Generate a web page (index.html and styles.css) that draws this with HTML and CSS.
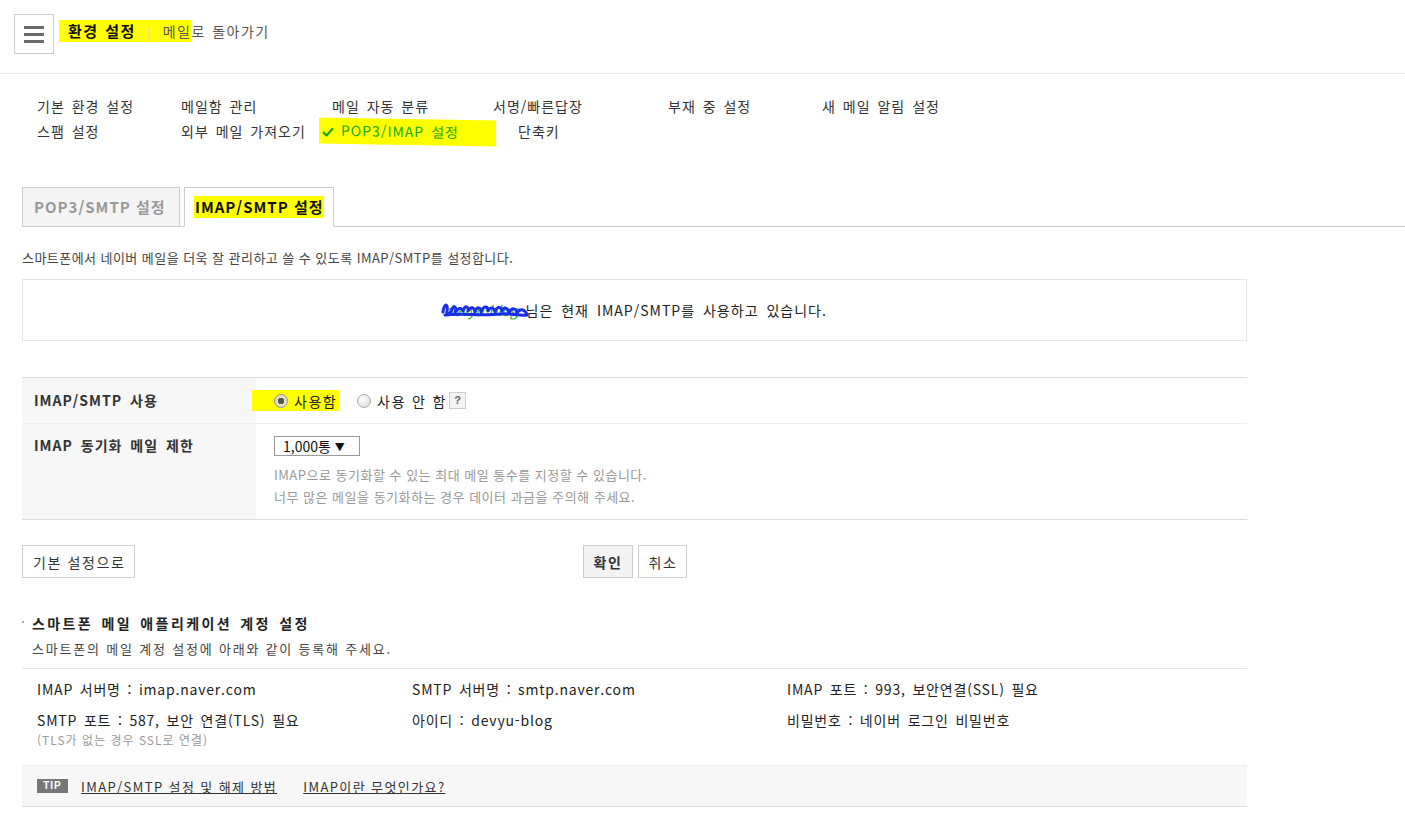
FILE: index.html
```html
<!DOCTYPE html>
<html lang="ko">
<head>
<meta charset="utf-8">
<title>환경 설정</title>
<link rel="stylesheet" href="styles.css">
</head>
<body>
<header class="top">
  <button class="burger" aria-label="메뉴">
    <span></span><span></span><span></span>
  </button>
  <div class="title-wrap">
    <span class="hl hl-title"><strong class="title">환경 설정</strong><span class="sep">|</span>메일</span><span class="back">로 돌아가기</span>
  </div>
</header>

<nav class="menu">
  <div class="menu-row">
    <a class="mi w144">기본 환경 설정</a>
    <a class="mi w151">메일함 관리</a>
    <a class="mi w161">메일 자동 분류</a>
    <a class="mi w175">서명/빠른답장</a>
    <a class="mi w154">부재 중 설정</a>
    <a class="mi">새 메일 알림 설정</a>
  </div>
  <div class="menu-row">
    <a class="mi w144">스팸 설정</a>
    <a class="mi w141">외부 메일 가져오기</a>
    <a class="mi w196 on"><span class="hl hl-menu"><svg class="check" width="12" height="10" viewBox="0 0 12 10"><path d="M1 5.5 L4.5 9 L11 1.5" fill="none" stroke="#19a800" stroke-width="2.2"/></svg>POP3/IMAP 설정</span></a>
    <a class="mi">단축키</a>
  </div>
</nav>

<main class="content">
  <div class="tabs">
    <a class="tab">POP3/SMTP 설정</a>
    <a class="tab active"><span class="hl hl-tab">IMAP/SMTP 설정</span></a>
  </div>

  <p class="desc">스마트폰에서 네이버 메일을 더욱 잘 관리하고 쓸 수 있도록 IMAP/SMTP를 설정합니다.</p>

  <div class="status">
    <span class="user"><span class="uid">devyu-blog</span><svg class="scribble" width="90" height="22" viewBox="0 0 90 22"><path d="M2 13 C3 5 7 3 6 12 C5 17 9 16 11 10 C13 6 16 8 14 13 C18 8 21 9 22 12 C24 6 28 7 27 12 C30 7 33 8 34 13 C36 7 40 8 40 13 C43 6 47 7 47 12 C50 7 53 9 54 13 C57 6 60 8 61 12 C63 7 67 9 68 14 C71 8 75 9 76 14 C79 9 83 10 86 15 M4 16 C20 14 40 17 60 15 C70 14 78 17 86 16" fill="none" stroke="#1a2ee6" stroke-width="3" stroke-linejoin="round" stroke-linecap="round"/></svg></span> 님은 현재 IMAP/SMTP를 사용하고 있습니다.
  </div>

  <div class="table">
    <div class="row r1">
      <div class="th">IMAP/SMTP 사용</div>
      <div class="td">
        <span class="hl hl-radio"><span class="radio checked"></span>사용함</span>
        <span class="radio"></span><span class="rlabel">사용 안 함</span><span class="qm">?</span>
      </div>
    </div>
    <div class="row r2">
      <div class="th">IMAP 동기화 메일 제한</div>
      <div class="td">
        <span class="select">1,000통 <span class="arrow">▼</span></span>
        <p class="help">IMAP으로 동기화할 수 있는 최대 메일 통수를 지정할 수 있습니다.<br>너무 많은 메일을 동기화하는 경우 데이터 과금을 주의해 주세요.</p>
      </div>
    </div>
  </div>

  <div class="btns">
    <button class="btn">기본 설정으로</button>
    <div class="btn-group">
      <button class="btn primary">확인</button>
      <button class="btn">취소</button>
    </div>
    <span></span>
  </div>

  <h3 class="sec-title">스마트폰 메일 애플리케이션 계정 설정</h3>
  <p class="sec-sub">스마트폰의 메일 계정 설정에 아래와 같이 등록해 주세요.</p>

  <div class="info">
    <div class="cell">IMAP 서버명 : imap.naver.com</div>
    <div class="cell">SMTP 서버명 : smtp.naver.com</div>
    <div class="cell">IMAP 포트 : 993, 보안연결(SSL) 필요</div>
    <div class="cell">SMTP 포트 : 587, 보안 연결(TLS) 필요<span class="note">(TLS가 없는 경우 SSL로 연결)</span></div>
    <div class="cell">아이디 : devyu-blog</div>
    <div class="cell">비밀번호 : 네이버 로그인 비밀번호</div>
  </div>

  <div class="tip">
    <span class="tip-badge">TIP</span>
    <a class="tip-link">IMAP/SMTP 설정 및 해제 방법</a>
    <a class="tip-link">IMAP이란 무엇인가요?</a>
  </div>
</main>
</body>
</html>
```

FILE: styles.css
```css
* { box-sizing: border-box; }
body {
  margin: 0;
  background: #fff;
  color: #333;
  font-family: "Noto Sans CJK KR", "Liberation Sans", sans-serif;
  font-size: 13px;
}
a { color: inherit; text-decoration: none; }
p { margin: 0; }

.hl { background: #ffff00; }

/* header */
.top {
  height: 74px;
  border-bottom: 1px solid #e6e6e6;
  padding: 14px 0 0 14px;
  display: flex;
  align-items: flex-start;
}
.burger {
  width: 40px;
  height: 40px;
  border: 1px solid #ccc;
  background: #fff;
  padding: 0;
  display: flex;
  flex-direction: column;
  justify-content: center;
  align-items: center;
  gap: 4px;
}
.burger span {
  display: block;
  width: 20px;
  height: 3px;
  background: #6a6a6a;
}
.title-wrap {
  margin-left: 5px;
  margin-top: 6px;
  font-size: 14px;
  line-height: 22px;
  letter-spacing: 1.5px;
  word-spacing: 1px;
}
.hl-title {
  display: inline-block;
  padding-left: 9px;
  height: 22px;
  color: #555;
}
.title {
  font-weight: bold;
  font-size: 15px;
  color: #111;
  letter-spacing: 1.5px;
}
.sep {
  color: #d8d8b0;
  margin: 0 11px 0 11px;
  font-size: 12px;
}
.back { color: #555; }

/* menu */
.menu {
  margin-top: 20px;
  padding-left: 37px;
  font-size: 14px;
  letter-spacing: 1px;
  word-spacing: 2px;
}
.menu-row {
  display: flex;
  height: 25px;
  line-height: 25px;
}
.mi { color: #333; white-space: nowrap; }
.w144 { width: 144px; }
.w151 { width: 151px; }
.w161 { width: 161px; }
.w175 { width: 175px; }
.w154 { width: 154px; }
.w141 { width: 141px; }
.w196 { width: 196px; }
.mi.on { color: #19a800; }
.hl-menu {
  display: inline-block;
  height: 26px;
  line-height: 24px;
  padding: 0 37px 0 3px;
  margin-left: -3px;
  transform: skewY(1deg);
}
.check { margin-right: 7px; vertical-align: -1px; }

/* content */
.content { padding-left: 22px; }

.tabs {
  margin-top: 43px;
  display: flex;
  gap: 4px;
  border-bottom: 1px solid #ccc;
  height: 40px;
}
.tab {
  height: 40px;
  border: 1px solid #ccc;
  background: #f4f4f4;
  color: #999;
  font-weight: bold;
  font-size: 15px;
  letter-spacing: 1px;
  line-height: 38px;
  padding: 0 11px;
  width: 158px;
  white-space: nowrap;
}
.tab.active {
  background: #fff;
  color: #111;
  border-bottom-color: #fff;
  width: 150px;
  padding: 0 9px;
}
.hl-tab {
  display: inline-block;
  line-height: 22px;
  padding-left: 1px;
}

.desc {
  margin-top: 22px;
  line-height: 18px;
  color: #444;
  font-size: 13px;
  letter-spacing: 0.45px;
}

.status {
  margin-top: 12px;
  width: 1225px;
  height: 62px;
  border: 1px solid #e5e5e5;
  text-align: center;
  line-height: 60px;
  font-size: 14px;
  color: #222;
  letter-spacing: 1px;
  word-spacing: 3px;
  padding-left: 2px;
}
.user {
  position: relative;
  display: inline-block;
  line-height: 20px;
  letter-spacing: 0;
}
.uid { color: #22b22a; font-size: 14px; font-style: italic; }
.scribble {
  position: absolute;
  left: -3px;
  top: -1px;
}

/* table */
.table {
  margin-top: 36px;
  width: 1225px;
  border-top: 1px solid #ddd;
  border-bottom: 1px solid #ddd;
}
.row { display: flex; }
.row + .row { border-top: 1px solid #eee; }
.r1 { height: 45px; }
.r2 { height: 96px; }
.th {
  width: 234px;
  background: #f7f7f7;
  padding: 0 12px;
  font-size: 14px;
  font-weight: bold;
  color: #333;
  letter-spacing: 1px;
  word-spacing: 3px;
}
.r1 .th { line-height: 44px; }
.r2 .th { padding-top: 11px; line-height: 20px; }
.td {
  flex: 1;
  padding-left: 18px;
  font-size: 14px;
}
.r1 .td {
  display: flex;
  align-items: center;
  padding-left: 0;
}
.hl-radio {
  display: inline-flex;
  align-items: center;
  height: 21px;
  width: 87px;
  margin-left: -4px;
  padding-left: 22px;
  margin-right: 18px;
  letter-spacing: 1.5px;
  color: #222;
}
.radio {
  display: inline-block;
  width: 14px;
  height: 14px;
  border-radius: 50%;
  border: 1px solid #aaa;
  background: radial-gradient(circle at 40% 35%, #fff, #d4d4d4);
  margin-right: 6px;
  flex: none;
}
.radio.checked {
  background: radial-gradient(circle, #555 0 3px, #e6e6c8 3.5px, #c9c9a0 100%);
  border-color: #999;
}
.rlabel { letter-spacing: 1.8px; word-spacing: 0; color: #222; }
.qm {
  display: inline-block;
  width: 17px;
  height: 17px;
  margin-left: 2px;
  border: 1px solid #ccc;
  background: #f3f3f3;
  color: #666;
  font-size: 11px;
  font-weight: bold;
  line-height: 15px;
  text-align: center;
  font-family: "Liberation Sans", sans-serif;
}
.r2 .td { padding-top: 12px; }
.select {
  display: inline-block;
  height: 20px;
  width: 86px;
  border: 1px solid #999;
  line-height: 18px;
  padding-left: 8px;
  font-size: 14px;
  color: #111;
}
.arrow { font-size: 10px; vertical-align: 1px; }
.help {
  margin-top: 8px;
  color: #999;
  font-size: 13px;
  line-height: 22px;
  letter-spacing: 0.5px;
}

/* buttons */
.btns {
  margin-top: 25px;
  width: 1225px;
  display: grid;
  grid-template-columns: 1fr auto 1fr;
  align-items: start;
}
.btns > .btn { justify-self: start; }
.btn-group { display: flex; gap: 5px; padding-left: 1px; }
.btn {
  height: 33px;
  border: 1px solid #ccc;
  background: #fff;
  font-family: "Noto Sans CJK KR", sans-serif;
  font-size: 14px;
  color: #333;
  padding: 0 9px 0 10px;
  letter-spacing: 1.6px;
}
.btn.primary {
  background: #f3f3f3;
  font-weight: bold;
}

/* section */
.sec-title {
  position: relative;
  margin: 35px 0 0 0;
  padding-left: 10px;
  font-size: 14px;
  line-height: 20px;
  color: #222;
  letter-spacing: 2.4px;
  word-spacing: 2px;
}
.sec-title::before {
  content: "";
  position: absolute;
  left: 0;
  top: 8px;
  width: 2px;
  height: 2px;
  background: #aaa;
}
.sec-sub {
  margin-top: 7px;
  padding-left: 10px;
  line-height: 18px;
  color: #444;
  letter-spacing: 1.8px;
}

.info {
  margin-top: 10px;
  width: 1225px;
  border-top: 1px solid #e2e2e2;
  display: grid;
  grid-template-columns: 375px 375px 1fr;
  align-content: start;
  padding: 10px 0 0 15px;
  font-size: 14px;
  letter-spacing: 0.8px;
  word-spacing: 2px;
  color: #222;
  row-gap: 11px;
  height: 97px;
}
.cell { line-height: 20px; }
.note {
  display: block;
  color: #999;
  font-size: 12px;
  letter-spacing: 1px;
  word-spacing: 0;
  line-height: 20px;
  margin-top: 0;
}

.tip {
  width: 1225px;
  height: 42px;
  background: #f7f7f7;
  border-top: 1px solid #eee;
  border-bottom: 1px solid #ddd;
  display: flex;
  align-items: center;
  padding-left: 15px;
}
.tip-badge {
  background: #777;
  color: #fff;
  font-family: "Liberation Sans", sans-serif;
  font-weight: bold;
  font-size: 10px;
  letter-spacing: 1px;
  width: 31px;
  height: 14px;
  line-height: 14px;
  text-align: center;
  margin-right: 13px;
}
.tip-link {
  text-decoration: underline;
  color: #333;
  font-size: 13px;
  letter-spacing: 1.4px;
  margin-right: 26px;
}
```
